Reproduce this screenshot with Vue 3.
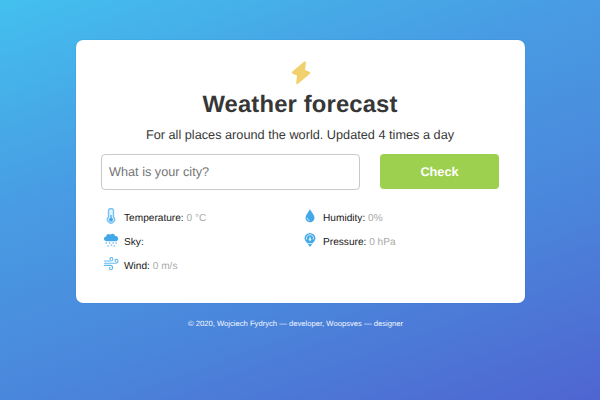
<script setup>
import { ref } from 'vue'

const city = ref('')
const columns = [
  [
    { icon: 'temperature', label: 'Temperature:', value: '0 °C' },
    { icon: 'sky', label: 'Sky:', value: '' },
    { icon: 'wind', label: 'Wind:', value: '0 m/s' },
  ],
  [
    { icon: 'humidity', label: 'Humidity:', value: '0%' },
    { icon: 'pressure', label: 'Pressure:', value: '0 hPa' },
  ],
]
</script>

<template>
  <div class="page">
    <main class="card">
      <svg class="bolt" viewBox="0 0 20 24">
        <path d="M13.5 1.2 L1.6 11.3 Q1.4 11.7 2 12 L6.8 14 L5.9 22 Q6.1 22.6 6.7 22.3 L18.4 12.3 Q18.6 11.8 18 11.5 L13.3 9.5 L14.2 1.7 Q14 1 13.5 1.2 Z" />
      </svg>
      <h1>Weather forecast</h1>
      <p class="subtitle">For all places around the world. Updated 4 times a day</p>
      <form class="search" @submit.prevent>
        <input v-model="city" type="text" placeholder="What is your city?" />
        <button type="submit">Check</button>
      </form>
      <section class="results">
        <ul v-for="(items, index) in columns" :key="index">
          <li v-for="item in items" :key="item.icon">
            <svg class="icon" viewBox="0 0 16 16">
              <template v-if="item.icon === 'temperature'">
                <path class="pale" d="M5.5 9V3a2.5 2.5 0 0 1 5 0v6a3.5 3.5 0 1 1-5 0Z" />
                <path class="line" d="M8 7v4" />
                <circle class="solid" cx="8" cy="11.7" r="2" />
              </template>
              <template v-else-if="item.icon === 'sky'">
                <path class="solid" d="M4 9.2C.2 9.2.1 4.8 3.2 4.4 3.2 2.1 6.2 1.3 7.3 2.7 9.3.8 12 2 12 4c3.9-.5 4.1 5.2.6 5.2Z" />
                <path class="rain" d="M3.1 11.1h.1M6.6 11.1h.1M10.1 11.1h.1M13.1 11.1h.1M5.1 14h.1M8.5 13.2h.1M11.4 14h.1" />
              </template>
              <template v-else-if="item.icon === 'wind'">
                <path class="air" d="M1.5 5h6C10.5 5 10.5 1.5 8.3 1.5 6.9 1.5 6.5 3 7.5 3.5M1.5 7.2h11c3.3 0 3-4 .8-4-1.6 0-1.8 2-.5 2.2M1.5 9.4h5.9c3 0 2.8 4.3.4 4.3-1.6 0-1.8-2-.5-2.2" />
              </template>
              <template v-else-if="item.icon === 'humidity'">
                <path class="solid" d="M8 1.2C6.3 4.4 3.5 7.2 3.5 9.7a4.5 4.5 0 0 0 9 0C12.5 7.2 9.7 4.4 8 1.2Z" />
                <path class="cut" d="M5.2 9.8c.1 1.4.9 2.4 2.2 2.8" />
              </template>
              <template v-else>
                <circle class="solid" cx="8" cy="6.3" r="5.4" />
                <path class="solid" d="M5 11h6l-3 4Z" />
                <path class="cut" d="M4.8 7.6a3.5 3.5 0 1 1 6.4 0M8 4.6v3.1M5.4 11.6h5.2" />
                <circle class="hub" cx="8" cy="7.6" r="1.3" />
              </template>
            </svg>
            <span class="label">{{ item.label }}</span>
            <span class="value">{{ item.value }}</span>
          </li>
        </ul>
      </section>
    </main>
    <footer>© 2020, Wojciech Fydrych — developer, Woopsves — designer</footer>
  </div>
</template>

<style>
body {
  margin: 0;
}
</style>

<style scoped>
.page {
  box-sizing: border-box;
  height: 400px;
  padding-top: 40px;
  overflow: hidden;
  display: flex;
  flex-direction: column;
  align-items: center;
  background: linear-gradient(160deg, #43c0ee 0%, #489ce3 34%, #4a86db 66%, #4f65d1 100%);
  font-family: "Liberation Sans", Arial, sans-serif;
  text-rendering: geometricPrecision;
}
.card {
  box-sizing: border-box;
  width: 449px;
  height: 262.5px;
  margin-left: 1px;
  padding: 21px 26px 0 25px;
  border-radius: 7px;
  background: #fff;
  box-shadow: 0 0 1px rgba(0, 105, 205, 0.7);
  display: flex;
  flex-direction: column;
  align-items: center;
}
.bolt {
  width: 20px;
  height: 24px;
  margin-left: 2px;
  flex: none;
  fill: #f1d16d;
  stroke: #f1d16d;
  stroke-width: 1.5;
  stroke-linejoin: round;
}
h1 {
  margin: 7px 0 0;
  font-size: 23.8px;
  line-height: 26px;
  letter-spacing: 0.16px;
  color: #373737;
}
.subtitle {
  margin: 9px 0 0;
  font-size: 12.72px;
  line-height: 16px;
  color: #373737;
  white-space: nowrap;
}
.search {
  align-self: stretch;
  display: flex;
  justify-content: space-between;
  margin-top: 11px;
}
input {
  box-sizing: border-box;
  width: 259px;
  height: 36px;
  padding: 0 7px;
  border: 1px solid #c9c9c9;
  border-radius: 4px;
  background: #fff;
  font: 12.7px "Liberation Sans", Arial, sans-serif;
  text-rendering: geometricPrecision;
}
input::placeholder {
  color: #757575;
}
button {
  width: 119px;
  height: 35px;
  padding: 0;
  border: 0;
  border-radius: 4px;
  background: #9dd04f;
  color: #fff;
  font: bold 12.7px "Liberation Sans", Arial, sans-serif;
  text-rendering: geometricPrecision;
}
.results {
  align-self: stretch;
  display: grid;
  grid-template-columns: 1fr 1fr;
  margin-top: 15px;
  padding-left: 2px;
}
ul {
  margin: 0;
  padding: 0;
  list-style: none;
}
ul + ul {
  padding-left: 1px;
}
li {
  display: flex;
  align-items: center;
  height: 24px;
  font-size: 10.15px;
  white-space: nowrap;
}
.icon {
  width: 16px;
  height: 16px;
  margin-right: 5px;
  margin-bottom: 2px;
}
.label,
.value {
  padding-top: 2px;
}
.label {
  margin-right: 2.8px;
  color: #171717;
}
.value {
  color: #aaa;
}
.solid {
  fill: #42a8e7;
}
.pale {
  fill: #e1f3ff;
  stroke: #77c2f3;
  stroke-width: 1.4;
}
.line {
  stroke: #42a8e7;
  stroke-width: 1.3;
}
.rain {
  stroke: #6ebcf0;
  stroke-width: 1.6;
  stroke-linecap: round;
}
.air {
  fill: none;
  stroke: #64b9ef;
  stroke-width: 1.1;
  stroke-linecap: round;
}
.cut {
  fill: none;
  stroke: #d9f0ff;
  stroke-width: 1;
}
.hub {
  fill: #d9f0ff;
}
footer {
  margin: 16px 9px 0 0;
  font-size: 7.65px;
  line-height: 10px;
  color: #f2f6ff;
  white-space: nowrap;
}
</style>
